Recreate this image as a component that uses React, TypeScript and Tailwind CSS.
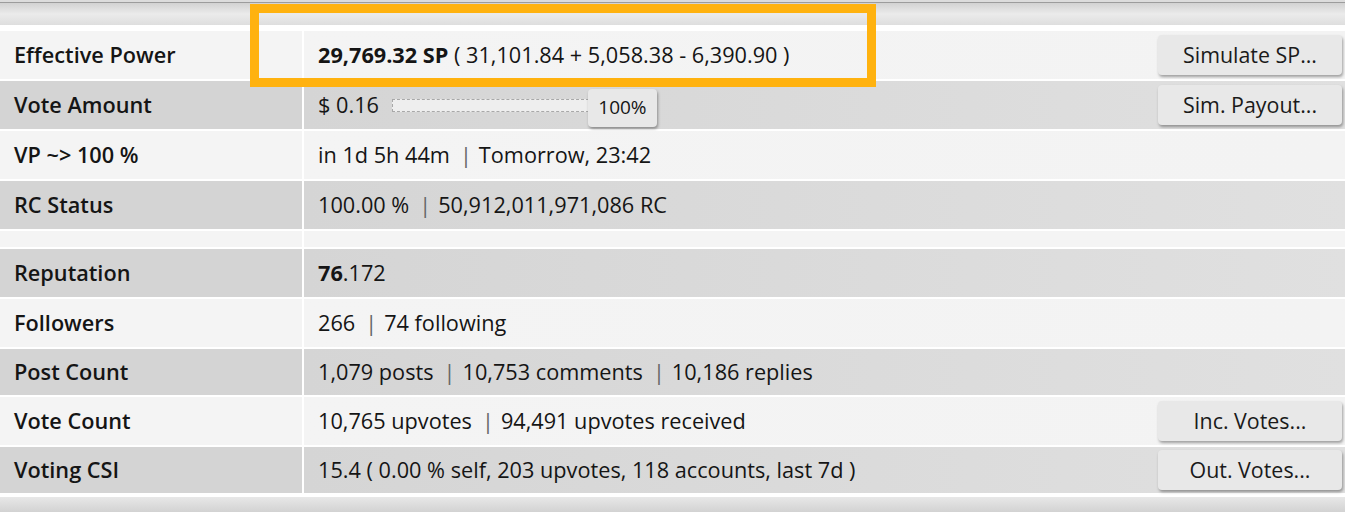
import type { ReactNode } from "react";

type Row = {
  label: string;
  value: ReactNode;
  button?: string;
  dark?: boolean;
  h?: string;
};

const Sep = () => <span className="ml-[10px] mr-[7px] text-[#666]">|</span>;

function ActionButton({ children }: { children: ReactNode }) {
  return (
    <button className="h-[40px] w-[184px] rounded-[4px] bg-[#e8e8e8] text-[21.4px] text-[#1a1a1a] shadow-[1px_2px_3px_rgba(0,0,0,0.35)]">
      {children}
    </button>
  );
}

const rows: Row[] = [
  {
    label: "Effective Power",
    value: (
      <>
        <b className="font-bold">29,769.32 SP</b> ( 31,101.84 + 5,058.38 - 6,390.90 )
      </>
    ),
    button: "Simulate SP...",
  },
  {
    label: "Vote Amount",
    dark: true,
    value: (
      <div className="flex items-center">
        <span>$ 0.16</span>
        <div className="ml-[13px] h-[13px] w-[197px] border border-dashed border-[#a8a8a8] bg-[#eeeeee]" />
        <button className="-ml-[1px] mt-[5px] h-[38px] w-[69px] rounded-[4px] bg-[#e8e8e8] text-[19px] shadow-[1px_2px_3px_rgba(0,0,0,0.35)]">
          100%
        </button>
      </div>
    ),
    button: "Sim. Payout...",
  },
  {
    label: "VP ~> 100 %",
    value: (
      <>
        in 1d 5h 44m
        <Sep />
        Tomorrow, 23:42
      </>
    ),
  },
  {
    label: "RC Status",
    dark: true,
    value: (
      <>
        100.00 %
        <Sep />
        50,912,011,971,086 RC
      </>
    ),
  },
];

const rows2: Row[] = [
  {
    label: "Reputation",
    dark: true,
    value: (
      <>
        <b className="font-bold">76</b>.172
      </>
    ),
  },
  {
    label: "Followers",
    value: (
      <>
        266
        <Sep />
        74 following
      </>
    ),
  },
  {
    label: "Post Count",
    dark: true,
    h: "h-[46px]",
    value: (
      <>
        1,079 posts
        <Sep />
        10,753 comments
        <Sep />
        10,186 replies
      </>
    ),
  },
  {
    label: "Vote Count",
    value: (
      <>
        10,765 upvotes
        <Sep />
        94,491 upvotes received
      </>
    ),
    button: "Inc. Votes...",
  },
  {
    label: "Voting CSI",
    dark: true,
    h: "h-[46px]",
    value: <>15.4 ( 0.00 % self, 203 upvotes, 118 accounts, last 7d )</>,
    button: "Out. Votes...",
  },
];

function TableRow({ row }: { row: Row }) {
  return (
    <div className={`flex gap-[2px] ${row.h ?? "h-[48px]"}`}>
      <div
        className={`flex w-[302px] shrink-0 items-center pl-[14px] font-semibold ${
          row.dark ? "bg-[#d4d4d4]" : "bg-[#f4f4f4]"
        }`}
      >
        {row.label}
      </div>
      <div
        className={`flex flex-1 items-center justify-between pl-[14px] pr-[3px] ${
          row.dark
            ? "bg-gradient-to-r from-[#d5d5d5] to-[#e0e0e0]"
            : "bg-gradient-to-r from-[#f4f4f4] to-[#f3f3f3]"
        }`}
      >
        <div className="whitespace-nowrap">{row.value}</div>
        {row.button && <ActionButton>{row.button}</ActionButton>}
      </div>
    </div>
  );
}

export default function App() {
  return (
    <div className="relative h-[512px] w-[1345px] overflow-hidden bg-white font-['Open_Sans',sans-serif] text-[21.7px] text-[#151515]">
      <div className="h-[2px] bg-[#dcdcdc]" />
      <div className="h-[23px] border-t border-[#9c9c9c] bg-gradient-to-b from-[#d2d2d2] via-[#ebebeb] to-[#dedede]" />

      <div className="mt-[6px] flex flex-col gap-[2px]">
        {rows.map((r) => (
          <TableRow key={r.label} row={r} />
        ))}
        <div className="flex h-[16px] gap-[2px]">
          <div className="w-[302px] bg-[#f4f4f4]" />
          <div className="flex-1 bg-[#f4f4f4]" />
        </div>
        {rows2.map((r) => (
          <TableRow key={r.label} row={r} />
        ))}
      </div>

      <div className="mt-[4px] h-[20px] bg-gradient-to-b from-[#e8e8e8] to-[#cbcbcb]" />

      <div className="absolute left-[250px] top-[4px] h-[83px] w-[626px] border-[9px] border-[#ffb20f]" />
    </div>
  );
}
